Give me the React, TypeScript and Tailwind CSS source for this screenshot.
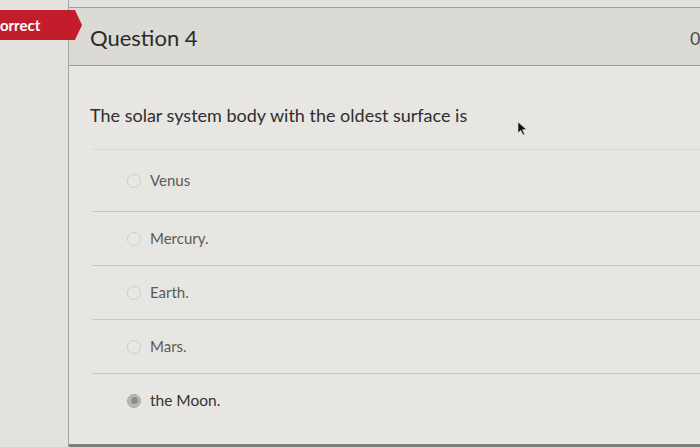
import React from "react";

const answers = [
  { id: 1, label: "Venus", selected: false },
  { id: 2, label: "Mercury.", selected: false },
  { id: 3, label: "Earth.", selected: false },
  { id: 4, label: "Mars.", selected: false },
  { id: 5, label: "the Moon.", selected: true },
];

function Radio({ checked }: { checked: boolean }) {
  if (checked) {
    return (
      <span className="w-[14px] h-[14px] rounded-full bg-[#b9b8b4] border border-[#a9a8a4] flex items-center justify-center shrink-0">
        <span className="w-[7px] h-[7px] rounded-full bg-[#8f8e8a]" />
      </span>
    );
  }
  return <span className="w-[14px] h-[14px] rounded-full border border-[#cfcec9] bg-[#e9e8e4] shrink-0" />;
}

export default function App() {
  return (
    <div className="relative w-[700px] h-[447px] overflow-hidden flex bg-[#e3e2de] font-['Lato','Open_Sans',sans-serif]">
      <div className="w-[68px] shrink-0" />

      <div className="flex-1 flex flex-col pt-[7px] border-l border-[#a6a5a1]">
        <div className="h-[59px] bg-[#dbdad5] border-t border-b border-[#9e9d99] flex items-center justify-between pl-[21px]">
          <h2 className="text-[22px] text-[#2a2a2a] leading-none mt-[3px]">Question 4</h2>
          <span className="text-[18px] text-[#4a4a4a] w-[10px] overflow-hidden whitespace-nowrap mt-[4px]">0 / 1 pts</span>
        </div>

        <div className="flex-1 bg-[#e7e6e2] border-b-[3px] border-[#7f7e7a] pl-[21px] pt-[37px]">
          <p className="text-[18px] leading-[24px] text-[#2e2e2e]">The solar system body with the oldest surface is</p>

          <div className="ml-[2px] mt-[22px]">
            {answers.map((a, i) => (
              <div
                key={a.id}
                className={`flex items-center gap-[9px] pl-[35px] border-t ${i === 0 ? "h-[62px] border-[#d9d8d4]" : "h-[54px] border-[#c9c8c4]"}`}
              >
                <Radio checked={a.selected} />
                <span className={`${a.selected ? "text-[15.5px] text-[#333333]" : "text-[15px] text-[#5a5a5a]"}`}>{a.label}</span>
              </div>
            ))}
          </div>
        </div>
      </div>

      {/* result tag, partly off the left edge */}
      <div className="absolute left-[-28px] top-[10px] h-[30px] w-[110px] bg-[#c31d2c] [clip-path:polygon(0_0,103px_0,110px_50%,103px_100%,0_100%)] flex items-center pl-[8px]">
        <span className="text-white font-bold text-[15px] leading-none">Incorrect</span>
      </div>

      {/* mouse pointer */}
      <svg className="absolute left-[517px] top-[121px]" width="11" height="15" viewBox="0 0 11 15">
        <path d="M1 1 L1 12 L3.8 9.4 L6 14 L7.6 13.2 L5.5 8.8 L9.5 8.6 Z" fill="#111" stroke="#e7e6e2" strokeWidth="0.6" />
      </svg>
    </div>
  );
}
